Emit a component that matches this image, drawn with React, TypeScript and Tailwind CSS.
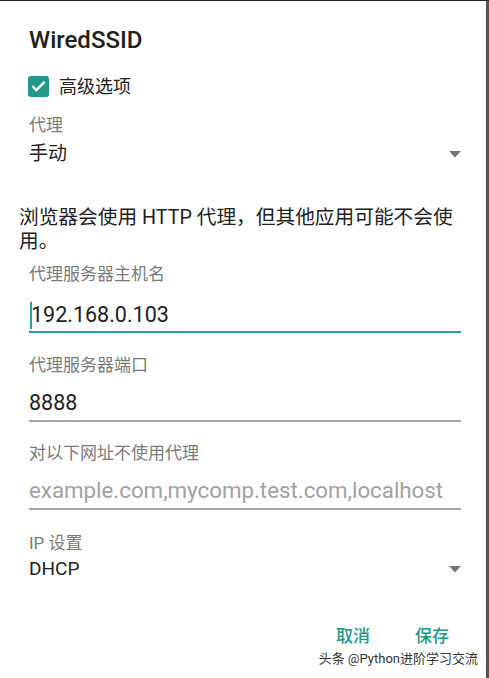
import React from "react";

const font = {
  fontFamily: '"Roboto", "Noto Sans CJK SC", sans-serif',
};

const Caret = () => (
  <svg width="12" height="7" viewBox="0 0 12 7" className="shrink-0">
    <path d="M0 0 L12 0 L6 6.5 Z" fill="#767676" />
  </svg>
);

const Label = ({ children }: { children: React.ReactNode }) => (
  <div className="text-[17px] leading-[22px] text-[#7a7a7a]">{children}</div>
);

const App = () => {
  return (
    <div
      style={font}
      className="w-[489px] h-[678px] bg-white flex flex-col border-t border-[#222] relative overflow-hidden"
    >
      <div className="flex flex-1 min-h-0">
        <div className="flex-1 flex flex-col">
          <h1 className="ml-[29px] mt-[25px] text-[24px] leading-[28px] font-medium text-[#212121]">
            WiredSSID
          </h1>

          <label className="ml-[28px] mt-[20px] flex items-center gap-[10px] h-[24px]">
            <span className="w-[21px] h-[21px] rounded-[3px] bg-[#23988a] flex items-center justify-center">
              <svg width="15" height="12" viewBox="0 0 15 12">
                <path
                  d="M1.5 6.2 L5.4 10 L13.5 1.8"
                  stroke="white"
                  strokeWidth="2.4"
                  fill="none"
                />
              </svg>
            </span>
            <span className="text-[18px] text-[#212121]">高级选项</span>
          </label>

          <div className="ml-[29px] mt-[16px]">
            <Label>代理</Label>
          </div>
          <div className="ml-[29px] mr-[25px] mt-[6px] flex items-center justify-between">
            <span className="text-[19px] leading-[24px] text-[#212121]">手动</span>
            <Caret />
          </div>

          <p className="ml-[19px] mr-[22px] mt-[40px] text-[19.7px] leading-[23.5px] text-[#212121]">
            浏览器会使用 HTTP 代理，但其他应用可能不会使用。
          </p>

          <div className="mr-[25px] ml-[29px] mt-[10px] flex flex-col">
            <Label>代理服务器主机名</Label>
            <div className="mt-[16px] flex items-center text-[21.5px] leading-[28px] text-[#212121]">
              <span className="w-[2px] h-[27px] bg-[#26a69a] mr-[-1px] ml-[1px]" />
              <span>192.168.0.103</span>
            </div>
            <div className="mt-[2px] h-[2px] bg-[#26a69a]" />

            <div className="mt-[21px]">
              <Label>代理服务器端口</Label>
            </div>
            <div className="mt-[13px] text-[21.5px] leading-[28px] text-[#212121]">8888</div>
            <div className="mt-[3px] h-[2px] bg-[#a6a6a6]" />

            <div className="mt-[20px]">
              <Label>对以下网址不使用代理</Label>
            </div>
            <div className="mt-[12px] text-[22.3px] leading-[28px] text-[#a2a2a2]">
              example.com,mycomp.test.com,localhost
            </div>
            <div className="mt-[4px] h-[2px] bg-[#a6a6a6]" />

            <div className="mt-[22px]">
              <Label>IP 设置</Label>
            </div>
            <div className="mt-[3px] flex items-center justify-between">
              <span className="text-[19px] leading-[24px] text-[#212121]">DHCP</span>
              <Caret />
            </div>
          </div>

          <div className="mt-[44px] mr-[37px] flex justify-end gap-[45px] text-[17px] leading-[22px] text-[#22968a] font-medium">
            <span>取消</span>
            <span>保存</span>
          </div>

          <div className="mt-[4px] mr-[8px] flex justify-end text-[13px] leading-[16px] text-[#333]">
            头条 @Python进阶学习交流
          </div>
        </div>
        <div className="w-[3px] bg-[#555]" />
      </div>
    </div>
  );
};

export default App;
